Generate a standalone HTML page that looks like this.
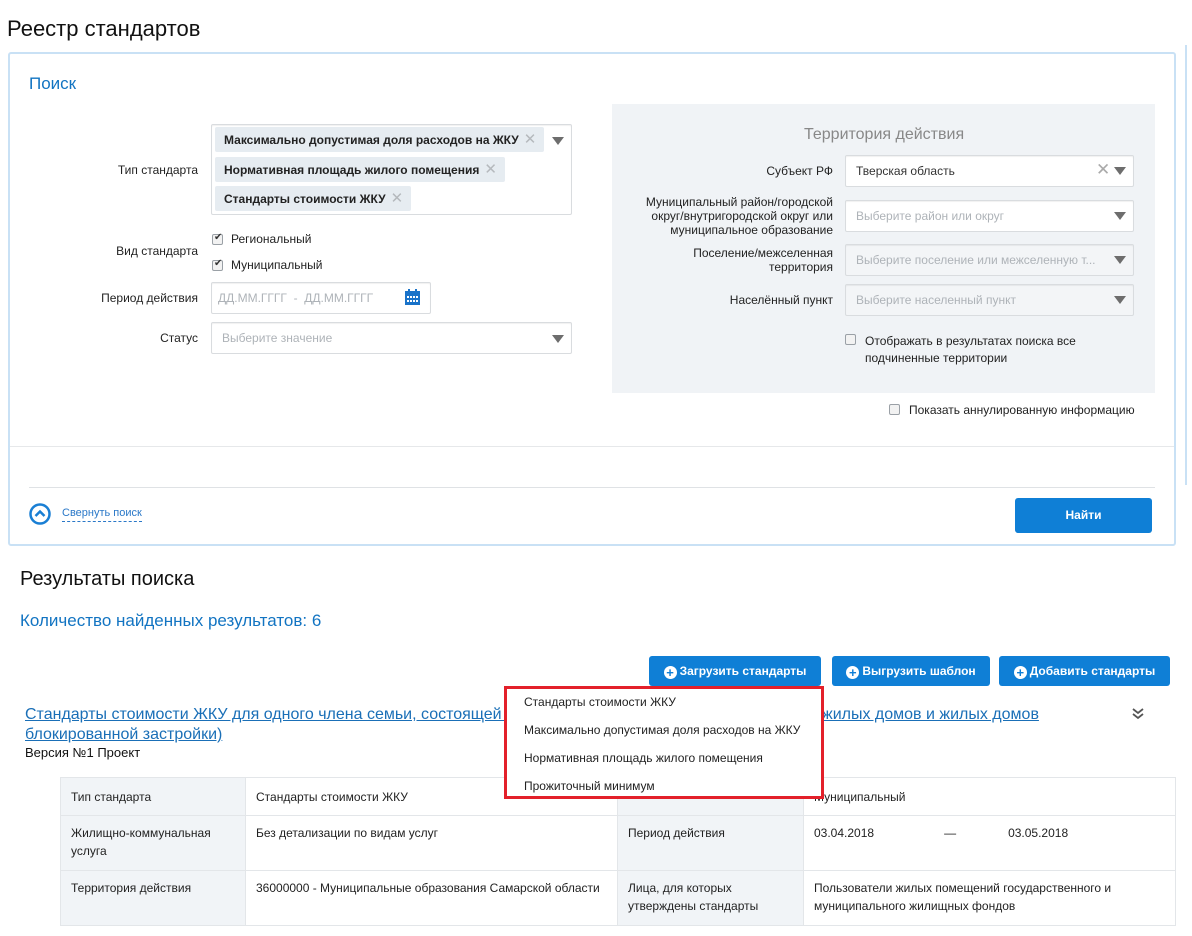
<!DOCTYPE html>
<html><head><meta charset="utf-8">
<style>
*{box-sizing:border-box;margin:0;padding:0}
body{width:1192px;height:936px;overflow:hidden;background:#fff;font-family:"Liberation Sans",Arial,sans-serif;color:#222;position:relative;font-size:12px}
.a{position:absolute;white-space:nowrap}
.r{text-align:right}
.inp{position:absolute;background:#fff;border:1px solid #d9dcdf;border-radius:2px;box-shadow:inset 0 1px 1px rgba(0,0,0,.06)}
.dis{background:#f3f5f7}
.arr{position:absolute;width:0;height:0;border-left:6px solid transparent;border-right:6px solid transparent;border-top:8px solid #6d6d6d}
.ph{color:#aeb3b8}
.tag{position:absolute;background:#e6ecf1;border-radius:2px;height:25px;font-weight:bold;font-size:12px;line-height:25px;padding-left:9px;color:#222}
.tag i{font-style:normal;color:#b5b9bd;font-weight:normal;font-size:15px;margin-left:5px}
.cb{position:absolute;width:11px;height:11px;border:1px solid #9aa0a6;border-radius:2px;background:#f2f2f2}
.cb.on::after{content:"✔";position:absolute;left:1px;top:-3px;font-size:10px;color:#333}
.btn{position:absolute;background:#0f7fd6;color:#fff;border-radius:3px;font-weight:bold;font-size:12px;text-align:center;line-height:30px;height:30px}
.plus{display:inline-block;width:13px;height:13px;border-radius:50%;background:#fff;color:#0f7fd6;font-size:13px;line-height:13px;vertical-align:-2px;margin-right:3px;font-weight:bold}
td{border:1px solid #e3e6e9;vertical-align:top;padding:8px 10px;font-size:12px;line-height:18px;color:#222}
td.l{background:#f1f4f7}
.lk{position:absolute;white-space:nowrap;font-size:16px;line-height:20px;color:#1a6fb7;text-decoration:underline}
</style></head><body>
<div class="a" style="left:7px;top:16px;font-size:22px;color:#111">Реестр стандартов</div>
<div style="position:absolute;left:8px;top:52px;width:1168px;height:494px;border:2px solid #c9e1f5;border-radius:3px"></div>
<div style="position:absolute;left:1185px;top:45px;width:2px;height:440px;background:#c9e1f5"></div>
<div class="a" style="left:29px;top:74px;font-size:17px;color:#1274c2">Поиск</div>

<div class="a r" style="left:60px;width:138px;top:163px">Тип стандарта</div>
<div class="inp" style="left:211px;top:124px;width:361px;height:91px"></div>
<div class="tag" style="left:215px;top:127px;width:329px">Максимально допустимая доля расходов на ЖКУ<i>✕</i></div>
<div class="tag" style="left:215px;top:157px;width:290px">Нормативная площадь жилого помещения<i>✕</i></div>
<div class="tag" style="left:215px;top:186px;width:196px">Стандарты стоимости ЖКУ<i>✕</i></div>
<div class="arr" style="left:552px;top:137px"></div>

<div class="a r" style="left:60px;width:138px;top:244px">Вид стандарта</div>
<div class="cb on" style="left:212px;top:234px"></div><div class="a" style="left:231px;top:232px">Региональный</div>
<div class="cb on" style="left:212px;top:260px"></div><div class="a" style="left:231px;top:258px">Муниципальный</div>
<div class="a r" style="left:60px;width:138px;top:291px">Период действия</div>
<div class="inp" style="left:211px;top:282px;width:220px;height:32px"></div>
<div class="a ph" style="left:218px;top:291px">ДД.ММ.ГГГГ &nbsp;- &nbsp;ДД.ММ.ГГГГ</div>
<svg class="a" style="left:405px;top:289px" width="15" height="16"><rect x="0" y="2" width="15" height="14" fill="#1a73c9"/><rect x="3" y="0" width="2" height="4" fill="#1a73c9"/><rect x="10" y="0" width="2" height="4" fill="#1a73c9"/><g fill="#fff"><rect x="2" y="7" width="2" height="2"/><rect x="5" y="7" width="2" height="2"/><rect x="8" y="7" width="2" height="2"/><rect x="11" y="7" width="2" height="2"/><rect x="2" y="11" width="2" height="2"/><rect x="5" y="11" width="2" height="2"/><rect x="8" y="11" width="2" height="2"/><rect x="11" y="11" width="2" height="2"/></g></svg>
<div class="a r" style="left:60px;width:138px;top:331px">Статус</div>
<div class="inp" style="left:211px;top:322px;width:361px;height:32px"></div>
<div class="a ph" style="left:222px;top:331px">Выберите значение</div>
<div class="arr" style="left:552px;top:335px"></div>

<div style="position:absolute;left:612px;top:104px;width:543px;height:289px;background:#f0f3f6"></div>
<div class="a" style="left:804px;top:126px;font-size:16px;color:#888">Территория действия</div>
<div class="a r" style="left:600px;width:233px;top:164px">Субъект РФ</div>
<div class="inp" style="left:845px;top:155px;width:289px;height:32px"></div>
<div class="a" style="left:856px;top:164px;color:#333">Тверская область</div>
<div class="a" style="left:1096px;top:160px;color:#aaa;font-size:17px">✕</div>
<div class="arr" style="left:1114px;top:167px"></div>
<div class="a r" style="left:600px;width:233px;top:195px;line-height:14px">Муниципальный район/городской<br>округ/внутригородской округ или<br>муниципальное образование</div>
<div class="inp" style="left:845px;top:200px;width:289px;height:32px"></div>
<div class="a ph" style="left:856px;top:209px">Выберите район или округ</div>
<div class="arr" style="left:1114px;top:212px"></div>
<div class="a r" style="left:600px;width:233px;top:246px;line-height:14px">Поселение/межселенная<br>территория</div>
<div class="inp dis" style="left:845px;top:244px;width:289px;height:32px"></div>
<div class="a ph" style="left:856px;top:253px">Выберите поселение или межселенную т...</div>
<div class="arr" style="left:1114px;top:256px"></div>
<div class="a r" style="left:600px;width:233px;top:293px">Населённый пункт</div>
<div class="inp dis" style="left:845px;top:284px;width:289px;height:32px"></div>
<div class="a ph" style="left:856px;top:293px">Выберите населенный пункт</div>
<div class="arr" style="left:1114px;top:296px"></div>
<div class="cb" style="left:845px;top:334px"></div>
<div class="a" style="left:865px;top:333px;line-height:17px">Отображать в результатах поиска все<br>подчиненные территории</div>
<div class="cb" style="left:889px;top:404px"></div>
<div class="a" style="left:909px;top:403px">Показать аннулированную информацию</div>

<div style="position:absolute;left:10px;top:446px;width:1164px;height:1px;background:#e6e8ea"></div>
<div style="position:absolute;left:29px;top:487px;width:1126px;height:1px;background:#dfe2e5"></div>
<svg class="a" style="left:29px;top:503px" width="22" height="22"><circle cx="11" cy="11" r="9.5" fill="none" stroke="#1a7fd4" stroke-width="2.5"/><path d="M6.5 13 L11 8.5 L15.5 13" fill="none" stroke="#1a7fd4" stroke-width="2.5"/></svg>
<div class="a" style="left:62px;top:507px;color:#2a78c8;border-bottom:1px dashed #2a78c8;font-size:11px;padding-bottom:2px">Свернуть поиск</div>
<div class="btn" style="left:1015px;top:498px;width:137px;height:35px;line-height:35px">Найти</div>

<div class="a" style="left:20px;top:568px;font-size:20px;color:#111">Результаты поиска</div>
<div class="a" style="left:20px;top:611px;font-size:17px;color:#1274c2">Количество найденных результатов: 6</div>

<div class="btn" style="left:649px;top:656px;width:172px"><span class="plus">+</span>Загрузить стандарты</div>
<div class="btn" style="left:832px;top:656px;width:158px"><span class="plus">+</span>Выгрузить шаблон</div>
<div class="btn" style="left:999px;top:656px;width:171px"><span class="plus">+</span>Добавить стандарты</div>

<div class="lk" style="left:25px;top:705px">Стандарты стоимости ЖКУ для одного члена семьи, состоящей из</div>
<div class="lk" style="left:822px;top:705px">жилых домов и жилых домов</div>
<div class="lk" style="left:25px;top:725px">блокированной застройки)</div>
<div class="a" style="left:25px;top:745px;font-size:13px;color:#111">Версия №1 Проект</div>
<svg class="a" style="left:1132px;top:707px" width="12" height="14"><path d="M1 2 L6 6 L11 2 M1 7 L6 11 L11 7" fill="none" stroke="#555" stroke-width="1.8"/></svg>

<table style="position:absolute;left:60px;top:777px;width:1116px;border-collapse:collapse">
<tr style="height:38px"><td class="l" style="width:185px;padding-top:10px">Тип стандарта</td><td style="width:372px;padding-top:10px">Стандарты стоимости ЖКУ</td><td class="l" style="width:186px"></td><td style="padding-top:10px">Муниципальный</td></tr>
<tr style="height:55px"><td class="l">Жилищно-коммунальная услуга</td><td>Без детализации по видам услуг</td><td class="l">Период действия</td><td>03.04.2018<span style="margin-left:70px">—</span><span style="margin-left:52px">03.05.2018</span></td></tr>
<tr style="height:55px"><td class="l">Территория действия</td><td>36000000 - Муниципальные образования Самарской области</td><td class="l">Лица, для которых утверждены стандарты</td><td>Пользователи жилых помещений государственного и муниципального жилищных фондов</td></tr>
</table>

<div style="position:absolute;left:504px;top:686px;width:320px;height:113px;background:#fff;border:3px solid #e3202a"></div>
<div class="a" style="left:524px;top:695px">Стандарты стоимости ЖКУ</div>
<div class="a" style="left:524px;top:723px">Максимально допустимая доля расходов на ЖКУ</div>
<div class="a" style="left:524px;top:751px">Нормативная площадь жилого помещения</div>
<div class="a" style="left:524px;top:779px">Прожиточный минимум</div>
</body></html>
